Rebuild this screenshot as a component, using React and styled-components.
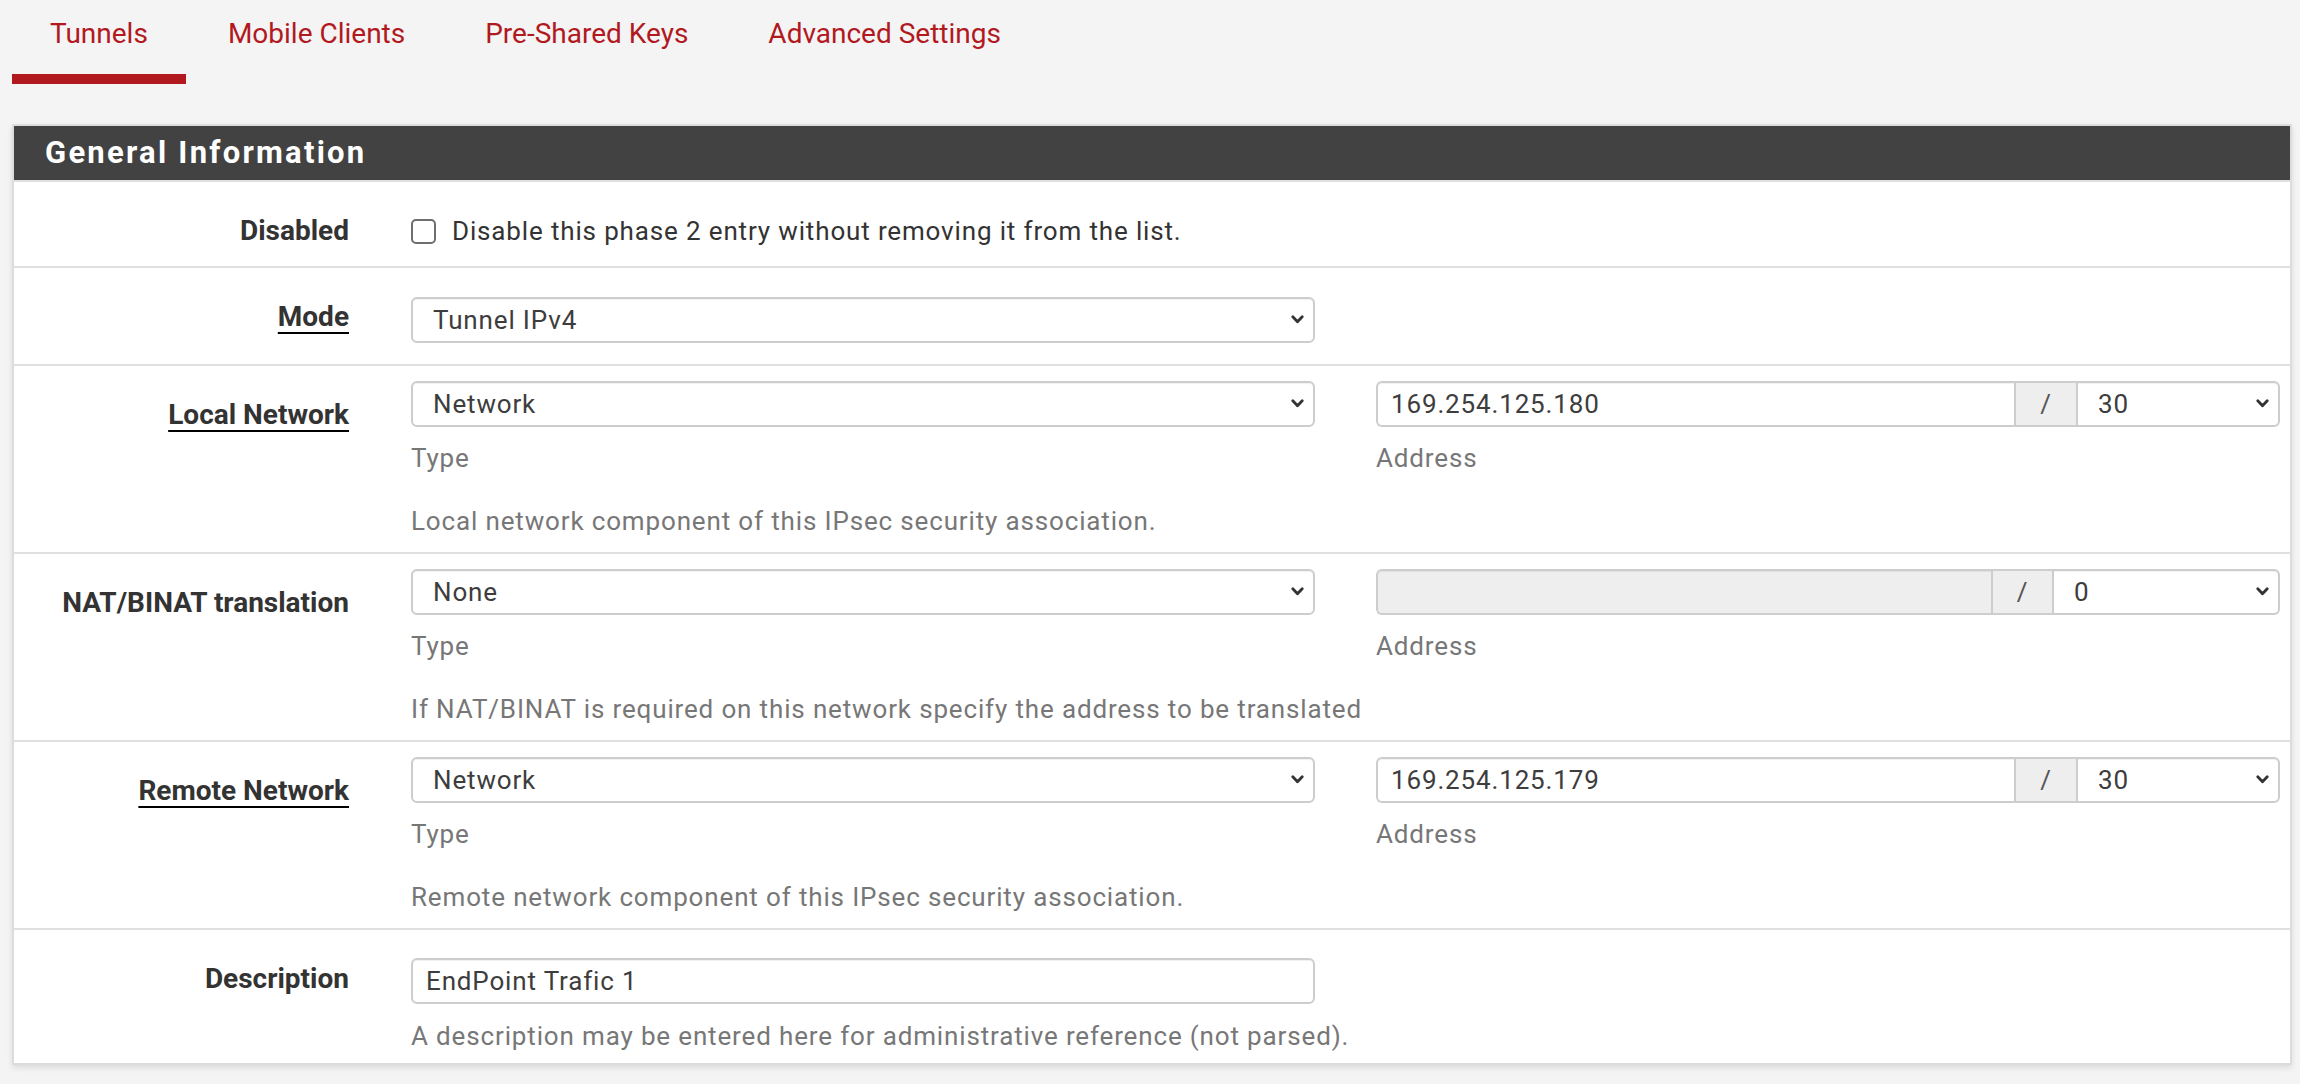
import React from 'react';
import styled, { createGlobalStyle } from 'styled-components';

const Global = createGlobalStyle`
  html, body { margin: 0; padding: 0; background: #f4f4f4; }
  body { font-family: Roboto, "Liberation Sans", sans-serif; }
  * { box-sizing: border-box; }
`;

const Page = styled.div`
  padding: 0 8px 0 12px;
  min-height: 1084px;
`;

const Tabs = styled.ul`
  display: flex;
  list-style: none;
  margin: 0 0 40px;
  padding: 0;
`;

const Tab = styled.li`
  margin-right: 4px;
  padding: 14px 38px 20px;
  font-size: 28px;
  line-height: 40px;
  color: #b2191f;
  border-bottom: 10px solid ${p => (p.$active ? '#b2191f' : 'transparent')};
`;

const Panel = styled.section`
  background: #fff;
  border: 2px solid #dcdcdc;
  box-shadow: 0 3px 6px rgba(0, 0, 0, 0.1);
`;

const PanelHeader = styled.h2`
  margin: 0;
  height: 54px;
  padding-left: 31px;
  background: #424242;
  color: #fff;
  font-size: 31px;
  font-weight: 700;
  letter-spacing: 2.25px;
  line-height: 54px;
`;

const Row = styled.div`
  display: grid;
  grid-template-columns: 335px 1fr;
  column-gap: 62px;
  border-top: 2px solid #e0e0e0;
`;

const Label = styled.div`
  padding-top: 29px;
  text-align: right;
  font-size: 28px;
  line-height: 40px;
  font-weight: 700;
  color: #333;
`;

const LabelText = styled.span`
  text-decoration: ${p => (p.$required ? 'underline' : 'none')};
  text-decoration-thickness: 2px;
  text-underline-offset: 6px;
  text-decoration-color: #000;
`;

const Content = styled.div`
  padding-top: ${p => p.$top}px;
  padding-bottom: ${p => p.$bottom}px;
  font-size: 26px;
  letter-spacing: 0.85px;
  line-height: 36px;
`;

const CheckLine = styled.label`
  display: flex;
  align-items: center;
  gap: 16px;
  color: #333;
`;

const CheckBox = styled.input.attrs({ type: 'checkbox' })`
  appearance: none;
  margin: 0;
  width: 25px;
  height: 25px;
  border: 2px solid #6e6e6e;
  border-radius: 5px;
  background: #fff;
`;

const FieldGrid = styled.div`
  display: grid;
  grid-template-columns: 904px 904px;
  column-gap: 61px;
`;

const Field = styled.div`
  display: flex;
  flex-direction: column;
  width: 904px;
`;

const Caption = styled.div`
  margin-top: 13px;
  color: #777;
`;

const Help = styled.div`
  margin-top: ${p => p.$gap}px;
  color: #777;
`;

const SelectWrap = styled.div`
  position: relative;
  width: ${p => (p.$width ? `${p.$width}px` : '100%')};
  flex: none;
`;

const NativeSelect = styled.select`
  appearance: none;
  width: 100%;
  height: 46px;
  margin: 0;
  padding: 0 40px 0 20px;
  font: inherit;
  font-size: 26px;
  letter-spacing: 0.85px;
  color: #3d3d3d;
  background: #fff;
  border: 2px solid #cdcdcd;
  border-radius: ${p => (p.$joined ? '0 6px 6px 0' : '6px')};
  border-left-width: ${p => (p.$joined ? '0' : '2px')};
  box-shadow: inset 0 1px 1px rgba(0, 0, 0, 0.06);
  outline: none;
`;

const Chevron = styled.svg`
  position: absolute;
  right: 11px;
  top: 18px;
  width: 13px;
  height: 9px;
  pointer-events: none;
`;

const TextInput = styled.input`
  height: 46px;
  width: 100%;
  margin: 0;
  padding: 0 13px;
  font: inherit;
  font-size: 26px;
  letter-spacing: 0.85px;
  color: #3d3d3d;
  background: ${p => (p.disabled ? '#eee' : '#fff')};
  border: 2px solid #cdcdcd;
  border-radius: ${p => (p.$joined ? '6px 0 0 6px' : '6px')};
  border-right-width: ${p => (p.$joined ? '0' : '2px')};
  box-shadow: inset 0 1px 1px rgba(0, 0, 0, 0.06);
  outline: none;
`;

const InputGroup = styled.div`
  display: flex;
  width: 100%;
  height: 46px;
`;

const Addon = styled.span`
  flex: none;
  width: ${p => p.$width}px;
  height: 46px;
  display: flex;
  align-items: center;
  justify-content: center;
  background: #eee;
  border: 2px solid #cdcdcd;
  color: #555;
  font-size: 26px;
`;

function Select({ value, width, joined }) {
  return (
    <SelectWrap $width={width}>
      <NativeSelect $joined={joined} defaultValue={value}>
        <option>{value}</option>
      </NativeSelect>
      <Chevron viewBox="0 0 13 9">
        <polyline points="1.8,1.8 6.5,6.8 11.2,1.8" fill="none" stroke="#333" strokeWidth="2.8" strokeLinecap="round" strokeLinejoin="round" />
      </Chevron>
    </SelectWrap>
  );
}

function Address({ value, mask, disabled, addonWidth, maskWidth }) {
  return (
    <InputGroup>
      <TextInput $joined disabled={disabled} defaultValue={value} />
      <Addon $width={addonWidth}>/</Addon>
      <Select value={mask} width={maskWidth} joined />
    </InputGroup>
  );
}

function NetworkRow({ label, required, type, address, mask, disabled, addonWidth, maskWidth, help }) {
  return (
    <Row>
      <Label><LabelText $required={required}>{label}</LabelText></Label>
      <Content $top={15} $bottom={13}>
        <FieldGrid>
          <Field>
            <Select value={type} />
            <Caption>Type</Caption>
          </Field>
          <Field>
            <Address value={address} mask={mask} disabled={disabled} addonWidth={addonWidth} maskWidth={maskWidth} />
            <Caption>Address</Caption>
          </Field>
        </FieldGrid>
        <Help $gap={27}>{help}</Help>
      </Content>
    </Row>
  );
}

export default function App() {
  return (
    <Page>
      <Global />
      <Tabs>
        <Tab $active>Tunnels</Tab>
        <Tab>Mobile Clients</Tab>
        <Tab>Pre-Shared Keys</Tab>
        <Tab>Advanced Settings</Tab>
      </Tabs>
      <Panel>
        <PanelHeader>General Information</PanelHeader>
        <Row>
          <Label><LabelText>Disabled</LabelText></Label>
          <Content $top={31} $bottom={17}>
            <CheckLine>
              <CheckBox />
              Disable this phase 2 entry without removing it from the list.
            </CheckLine>
          </Content>
        </Row>
        <Row>
          <Label><LabelText $required>Mode</LabelText></Label>
          <Content $top={29} $bottom={21}>
            <Field>
              <Select value="Tunnel IPv4" />
            </Field>
          </Content>
        </Row>
        <NetworkRow
          label="Local Network"
          required
          type="Network"
          address="169.254.125.180"
          mask="30"
          addonWidth={64}
          maskWidth={202}
          help="Local network component of this IPsec security association."
        />
        <NetworkRow
          label="NAT/BINAT translation"
          type="None"
          address=""
          mask="0"
          disabled
          addonWidth={63}
          maskWidth={226}
          help="If NAT/BINAT is required on this network specify the address to be translated"
        />
        <NetworkRow
          label="Remote Network"
          required
          type="Network"
          address="169.254.125.179"
          mask="30"
          addonWidth={64}
          maskWidth={202}
          help="Remote network component of this IPsec security association."
        />
        <Row>
          <Label><LabelText>Description</LabelText></Label>
          <Content $top={28} $bottom={9}>
            <Field>
              <TextInput defaultValue="EndPoint Trafic 1" />
            </Field>
            <Help $gap={14}>A description may be entered here for administrative reference (not parsed).</Help>
          </Content>
        </Row>
      </Panel>
    </Page>
  );
}
